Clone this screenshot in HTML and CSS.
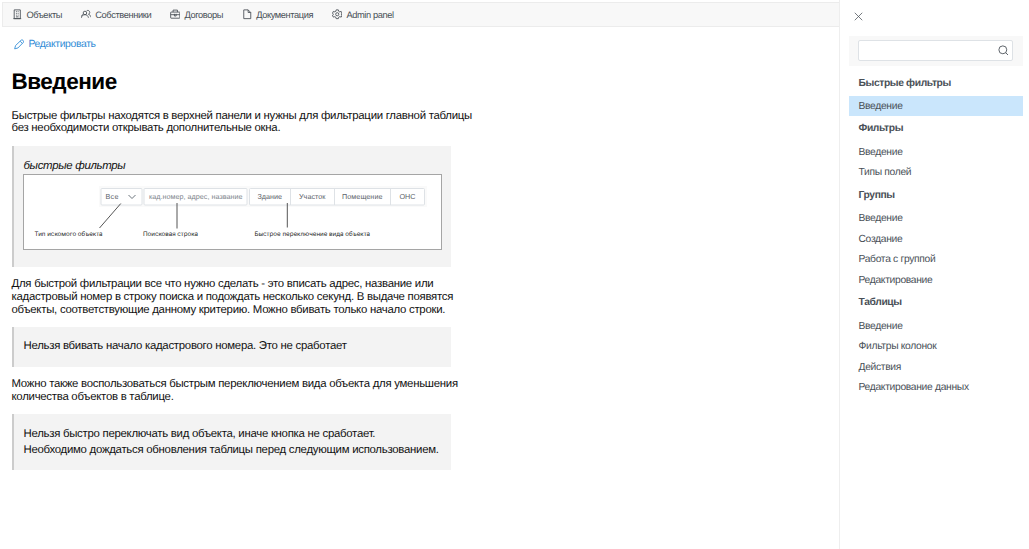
FILE: index.html
```
<!DOCTYPE html>
<html lang="ru">
<head>
<meta charset="utf-8">
<title>Введение</title>
<link rel="stylesheet" href="styles.css">
</head>
<body>
<div class="app">
  <div class="main">
    <nav class="topbar">
      <a class="nav-item"><svg class="icon" viewBox="0 0 24 24"><path d="M5 2h14v20H5zM3 22h18M9 6h2M13 6h2M9 10h2M13 10h2M9 14h2M13 14h2M9 18h6"/></svg><span>Объекты</span></a>
      <a class="nav-item"><svg class="icon" viewBox="0 0 24 24"><circle cx="9" cy="9" r="4"/><path d="M1 20c1-5 4-7 8-7s7 2 8 7M13 4c3-2 7 0 7 4 0 2-1 3-3 4 3 1 5 3 6 7M5 12c-2 1-3 2-4 5"/></svg><span>Собственники</span></a>
      <a class="nav-item"><svg class="icon" viewBox="0 0 24 24"><rect x="1.5" y="7" width="21" height="14" rx="1"/><path d="M7 7V2.500h10V7M1.500 13h21M10 11v5h4v-5"/></svg><span>Договоры</span></a>
      <a class="nav-item"><svg class="icon" viewBox="0 0 24 24"><path d="M4 2h10l6 6v14H4zM14 2v6h6"/></svg><span>Документация</span></a>
      <a class="nav-item"><svg class="icon" viewBox="0 0 24 24"><path d="M9.500 2h5l1 3.500 2 1 3.500-1 2 4.500-2.500 2 2.500 2-2 4.500-3.500-1-2 1-1 3.500h-5l-1-3.500-2-1-3.500 1L1 14l2.500-2L1 10l2-4.500 3.500 1 2-1z"/><circle cx="12" cy="12" r="3.600"/></svg><span>Admin panel</span></a>
    </nav>
    <article class="article">
      <a class="edit"><svg class="icon" viewBox="0 0 24 24"><path d="M1.500 22.500l2-7.500L16.500 2.500c2.500-2 7 2 5 5L9 20.500zM14 5l5 5"/></svg><span>Редактировать</span></a>
      <h1 class="title">Введение</h1>
      <p class="para">Быстрые фильтры находятся в верхней панели и нужны для фильтрации главной таблицы<br>без необходимости открывать дополнительные окна.</p>
      <div class="note figure">
        <em class="caption">быстрые фильтры</em>
        <svg class="diagram" viewBox="0 0 419 76" width="419" height="76">
          <rect class="frame" x=".5" y=".5" width="418" height="75"/>
          <rect class="halo" x="76" y="12" width="328" height="21"/>
          <g class="box">
            <rect x="78" y="14.500" width="41" height="16.500" rx="1"/>
            <rect x="121" y="14.500" width="103" height="16.500" rx="1"/>
            <rect x="226.500" y="14.500" width="175" height="16.500" rx="1"/>
            <path d="M267.500 14.500V31M311.500 14.500V31M367.500 14.500V31"/>
          </g>
          <path class="chevron" d="M105.500 21l3.500 3.500 3.500-3.500"/>
          <g class="control">
            <text x="82.500" y="25" textLength="13">Все</text>
            <text class="hint" x="126" y="25" textLength="93.500">кад.номер, адрес, название</text>
            <text x="234.500" y="25" textLength="24.500">Здание</text>
            <text x="276" y="25" textLength="26.500">Участок</text>
            <text x="319" y="25" textLength="40.500">Помещение</text>
            <text x="376.500" y="25" textLength="16">ОНС</text>
          </g>
          <path class="leader" d="M97.800 29.500L76.500 54M154 29v25.500M264.300 29v24.500"/>
          <g class="label">
            <text x="11.500" y="62" textLength="68">Тип искомого объекта</text>
            <text x="120" y="62" textLength="55">Поисковая строка</text>
            <text x="231.500" y="62" textLength="115.500">Быстрое переключение вида объекта</text>
          </g>
        </svg>
      </div>
      <p class="para">Для быстрой фильтрации все что нужно сделать - это вписать адрес, название или<br>кадастровый номер в строку поиска и подождать несколько секунд. В выдаче появятся<br>объекты, соответствующие данному критерию. Можно вбивать только начало строки.</p>
      <div class="note single">Нельзя вбивать начало кадастрового номера. Это не сработает</div>
      <p class="para">Можно также воспользоваться быстрым переключением вида объекта для уменьшения<br>количества объектов в таблице.</p>
      <div class="note double">Нельзя быстро переключать вид объекта, иначе кнопка не сработает.<br>Необходимо дождаться обновления таблицы перед следующим использованием.</div>
    </article>
  </div>
  <aside class="sidebar">
    <svg class="icon close" viewBox="0 0 24 24"><path d="M2 2l20 20M22 2L2 22"/></svg>
    <div class="search"><div class="field"><svg class="icon" viewBox="0 0 24 24"><circle cx="11" cy="11" r="9"/><path d="M17.500 17.500l5.500 5.500"/></svg></div></div>
    <div class="menu">
      <div class="group">Быстрые фильтры</div>
      <a class="item active">Введение</a>
      <div class="group">Фильтры</div>
      <a class="item">Введение</a>
      <a class="item">Типы полей</a>
      <div class="group">Группы</div>
      <a class="item">Введение</a>
      <a class="item">Создание</a>
      <a class="item">Работа с группой</a>
      <a class="item">Редактирование</a>
      <div class="group">Таблицы</div>
      <a class="item">Введение</a>
      <a class="item">Фильтры колонок</a>
      <a class="item">Действия</a>
      <a class="item">Редактирование данных</a>
    </div>
  </aside>
</div>
</body>
</html>
```
FILE: styles.css
```
* { box-sizing: border-box; }
body {
  margin: 0;
  background: #fff;
  color: #111;
  font-family: "Liberation Sans", Arial, sans-serif;
  text-rendering: geometricPrecision;
  overflow: hidden;
}
.app { display: flex; width: 1029px; height: 549px; }
.main { width: 839px; padding: 2px 0 0 2px; }
.icon { fill: none; stroke: currentColor; stroke-width: 2; flex: none; }
.topbar {
  display: flex;
  align-items: center;
  gap: 18.700px;
  height: 25px;
  padding-left: 9px;
  background: #f8f8f8;
  border: 1px solid #ececec;
  border-right: 0;
  color: #495057;
  font-size: 9.3px;
  letter-spacing: -.4px;
}
.nav-item { display: flex; align-items: center; gap: 4px; white-space: nowrap; }
.nav-item .icon { width: 10.500px; height: 10.500px; }
.article { padding: 11px 0 0 9.500px; }
.edit {
  display: flex;
  align-items: center;
  gap: 4.500px;
  height: 13px;
  padding-left: 2px;
  color: #2f8bd6;
  font-size: 10.400px;
  letter-spacing: -.36px;
}
.edit .icon { width: 10.500px; height: 10.500px; }
.title { margin: 18px 0 14.500px; font-size: 22.500px; line-height: 26px; letter-spacing: -.48px; color: #000; }
.para { margin: 0; font-size: 11.400px; line-height: 12.900px; letter-spacing: -.267px; white-space: nowrap; }
.note {
  width: 439.500px;
  margin: 10.500px 0;
  padding-left: 10px;
  background: #f3f3f3;
  border-left: 2.500px solid #ccc;
  font-size: 11.400px;
  line-height: 16.300px;
  letter-spacing: -.27px;
  white-space: nowrap;
}
.figure { height: 121.500px; padding-top: 12px; }
.caption { display: block; letter-spacing: -.3px; }
.diagram { display: block; margin: -.5px 0 0 -1px; letter-spacing: 0; }
.frame { fill: #fff; stroke: #a5a5a5; }
.halo { fill: #fafafa; }
.box { fill: #fff; stroke: #dee2e6; stroke-width: 1; }
.chevron { fill: none; stroke: #6c757d; stroke-width: 1; }
.leader { fill: none; stroke: #555; stroke-width: 1; }
.control { fill: #5c636a; font-size: 7.200px; }
.hint { fill: #7c848b; }
.label { fill: #222; font-family: Inter, "Liberation Sans", sans-serif; font-size: 6.200px; }
.single { height: 39.500px; margin-bottom: 11.200px; padding-top: 11px; }
.double { height: 56px; padding-top: 11.500px; }
.sidebar {
  width: 190px;
  padding: 12px 6px 0 9px;
  border-left: 1px solid #eee;
  color: #495057;
}
.close { display: block; width: 9px; height: 9px; margin-left: 5px; }
.search { height: 29.500px; margin-top: 15px; padding: 4px 10px 4.500px 9px; background: #f8f8f8; }
.field {
  display: flex;
  align-items: center;
  justify-content: flex-end;
  height: 21px;
  padding-right: 4px;
  background: #fff;
  border: 1px solid #dee2e6;
  border-radius: 2px;
}
.field .icon { width: 10.500px; height: 10.500px; }
.menu { padding-top: 5px; font-size: 10.300px; letter-spacing: -.32px; }
.group { height: 25.300px; padding-left: 9.500px; line-height: 26.600px; font-weight: bold; letter-spacing: -.38px; }
.item { display: block; height: 20.550px; padding-left: 9.500px; line-height: 22px; white-space: nowrap; }
.active { background: #cae6fc; }
```
